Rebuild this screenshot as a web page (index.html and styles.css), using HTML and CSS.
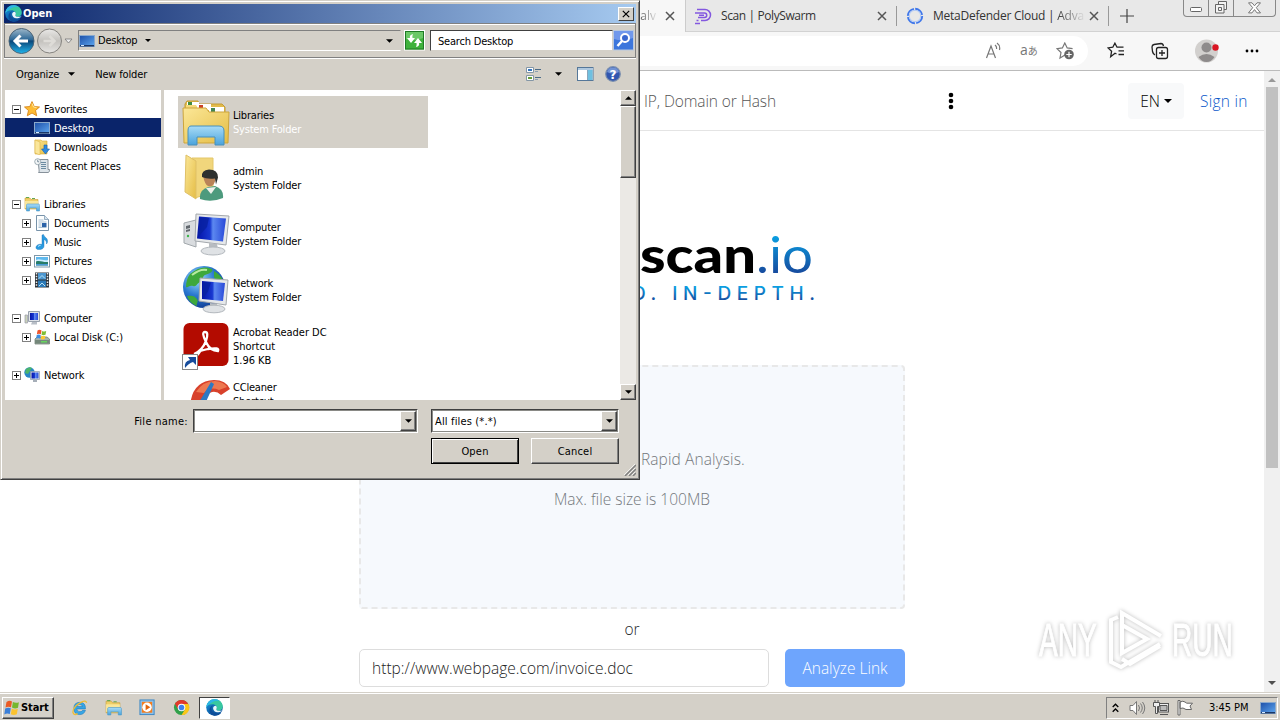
FILE: index.html
```html
<!DOCTYPE html>
<html lang="en">
<head>
<meta charset="utf-8">
<title>Open</title>
<link rel="stylesheet" href="styles.css">
</head>
<body>
<svg class="defs" width="0" height="0">
  <defs>
    <linearGradient id="gBlue" x1="0" y1="0" x2="0" y2="1"><stop offset=".2" stop-color="#0a9fe2"/><stop offset=".8" stop-color="#164da0"/></linearGradient>
    <linearGradient id="gScreen" x1="0" y1="0" x2="1" y2="0"><stop offset="0" stop-color="#0414a8"/><stop offset=".45" stop-color="#1838d0"/><stop offset=".55" stop-color="#5c88f0"/><stop offset="1" stop-color="#2848d8"/></linearGradient>
    <linearGradient id="gFolder" x1="0" y1="0" x2="1" y2="1"><stop offset="0" stop-color="#fbe798"/><stop offset="1" stop-color="#e5bd45"/></linearGradient>
    <linearGradient id="gStand" x1="0" y1="0" x2="0" y2="1"><stop offset="0" stop-color="#a9dcf7"/><stop offset="1" stop-color="#4aa3dc"/></linearGradient>
    <linearGradient id="gDesk" x1="0" y1="0" x2="1" y2="1"><stop offset="0" stop-color="#1d4fa8"/><stop offset="1" stop-color="#5fa8f0"/></linearGradient>
    <linearGradient id="gEdge" x1="0" y1="0" x2="1" y2="1"><stop offset="0" stop-color="#1b9de2"/><stop offset=".6" stop-color="#0c59a4"/></linearGradient>
    <radialGradient id="gGlobe" cx=".35" cy=".3" r=".8"><stop offset="0" stop-color="#9fe0ff"/><stop offset=".5" stop-color="#2a78d0"/><stop offset="1" stop-color="#0a2f88"/></radialGradient>
    <linearGradient id="gBack" x1="0" y1="0" x2="0" y2="1"><stop offset="0" stop-color="#9db7c9"/><stop offset=".45" stop-color="#2c6796"/><stop offset=".5" stop-color="#0a4678"/><stop offset="1" stop-color="#20b4ec"/></linearGradient>
    <linearGradient id="gFwd" x1="0" y1="0" x2="0" y2="1"><stop offset="0" stop-color="#e9e8e6"/><stop offset=".5" stop-color="#c4c2be"/><stop offset="1" stop-color="#e6e5e3"/></linearGradient>

    <symbol id="edge" viewBox="0 0 16 16">
      <circle cx="8" cy="8" r="7.800" fill="url(#gEdge)"/>
      <path d="M.3 7.500C.9 3 4.100.2 8 .2c4.400 0 7.800 3 7.800 6.800 0 2.400-1.800 4-4.100 4-1.800 0-2.500-.7-2-1.500C11 7.500 9 5 6 5 3.200 5 1 6 .3 7.500z" fill="#38c8a0"/>
      <path d="M.3 7.500C.9 3 4.100.2 8 .2c2 0 3.800.6 5.100 1.700C9 1 5 2.500.3 7.500z" fill="#2cb5e8"/>
      <path d="M6.500 6C4 8 5 12.500 9.500 13.500c1.800.4 3.600 0 4.900-.8-1.300 2-3.700 3.200-6.400 3.100C4.500 15 2 11 4 8c.7-1.100 1.500-1.700 2.500-2z" fill="#0d4d98"/>
      <path d="M9.800 9.300c.8-1.300.3-2.500-.8-3-1.300.1-2.300 1.100-2.300 2.400 0 2.300 2.500 4.200 5.200 3.800 1.600-.2 2.800-.9 3.600-1.900-1.700 1-6.700.6-5.700-1.300z" fill="#e9f7fb"/>
    </symbol>
    <symbol id="desk" viewBox="0 0 16 14"><rect x=".5" y="1.500" width="15" height="11" fill="url(#gDesk)" stroke="#8ba9cc"/><path d="M1 11h14v1.500H1z" fill="#1b3767"/><path d="M2 11h3v1H2z" fill="#d5e9ff"/></symbol>
    <symbol id="star" viewBox="0 0 16 16"><path d="M8 .6l2.200 4.900 5.300.5-4 3.500 1.200 5.300L8 12l-4.700 2.800 1.200-5.300-4-3.500 5.300-.5z" fill="#fdbb35" stroke="#d98617" stroke-width=".9"/><path d="M8 2.500L9.500 6l3 .5" fill="none" stroke="#ffe9a0"/></symbol>
    <symbol id="down" viewBox="0 0 16 16"><path d="M1 1h6l1 1h5v13H1z" fill="url(#gFolder)" stroke="#d9ac3a" stroke-width=".6"/><path d="M1 1l5 2v13l-5-2z" fill="#fae69b" stroke="#d9ac3a" stroke-width=".5"/><path d="M10 6h3v4h2.500l-4 5-4-5H10z" fill="#2f8ae0" stroke="#1660b0" stroke-width=".6"/></symbol>
    <symbol id="recent" viewBox="0 0 16 16"><path d="M4 1.500h10v10h1.500c0 2-.5 3-1.500 3H4.500c1-1 .5-2 .5-3z" fill="#dde4e9" stroke="#7a8690" stroke-width=".9"/><path d="M7 4.500h5M7 6.500h5M7 8.500h5M7 10.500h5" stroke="#5f8098" stroke-width=".9"/><circle cx="3.700" cy="3.700" r="3" fill="#f4f7f8" stroke="#8a9aa5" stroke-width=".8"/><path d="M3.700 1.800v2h1.500" fill="none" stroke="#4c6579" stroke-width=".7"/></symbol>
    <symbol id="lib" viewBox="0 0 16 16"><path d="M1 2h5l1 1.500h7V13H1z" fill="#efcf66" stroke="#c99f35" stroke-width=".6"/><path d="M2 1.500h3M8 2.500h3" stroke="#65a850"/><path d="M1 5h13v7H1z" fill="#f9e69a"/><path d="M3.500 8h11c1 0 1 1 1 1.500V15h-3v-3h-7v3h-3V9.500c0-1 .3-1.500 1-1.500z" fill="url(#gStand)" stroke="#4d9bc9" stroke-width=".6"/></symbol>
    <symbol id="doc" viewBox="0 0 16 16"><path d="M2.500.5h8l4 4v11h-12z" fill="#fdfefe" stroke="#7893aa"/><path d="M10.500.5v4h4" fill="#d6e4ef" stroke="#7893aa" stroke-width=".7"/><path d="M4.500 5h5M4.500 7h8M4.500 12.500h8" stroke="#93b1ca" stroke-width=".8"/><path d="M8 8h4.500v4H8z" fill="#2c63a8"/><path d="M4.500 9h3M4.500 11h3" stroke="#93b1ca" stroke-width=".8"/></symbol>
    <symbol id="music" viewBox="0 0 16 16"><path d="M8 1l1.500-.5c.5 3 4.500 3 4 7 0 1-.5 2-1 2.500.5-3-1.500-4-2.500-4.500v6.500c0 2-1.500 3-3.500 3.500C3.500 16 1.500 14.800 2 13c.4-2 3.500-3.500 6-2.500z" fill="#2a9be0" stroke="#1269b0" stroke-width=".4"/><path d="M4 12.500c.6-.8 1.500-1 2.500-1" stroke="#bfe8ff" fill="none"/></symbol>
    <symbol id="pic" viewBox="0 0 16 16"><rect x=".5" y="2.500" width="15" height="11.500" fill="#fff" stroke="#7e98aa"/><path d="M2 4h12v5H2z" fill="#5eb9ee"/><path d="M2 7c3-2 7 1 12 0v2H2z" fill="#cdeeff"/><path d="M2 8.500c4-1.500 7 1 12 .5v3.500H2z" fill="#287d69"/><path d="M2 11h12v1.500H2z" fill="#4a9ad8"/></symbol>
    <symbol id="vid" viewBox="0 0 16 16"><path d="M1 .5h14v15H1z" fill="#2d3339"/><path d="M4 1h8v6.500H4z" fill="#4d97d0"/><path d="M4 8.500h8V15H4z" fill="#2c7ab8"/><path d="M5 6.500l3-3 3 3M5 14l3-3 3 3" stroke="#b9e2f2" fill="none"/><path d="M2.500 1v14M13.500 1v14" stroke="#eee" stroke-width="1.500" stroke-dasharray="1.500 1.300"/></symbol>
    <symbol id="pc" viewBox="0 0 48 48"><path d="M2 13l12-3v27l-12-4z" fill="#d9dcdf" stroke="#a2a8ac"/><path d="M4 16l4-1v3l-4 1zM4 20l4-1v2l-4 1z" fill="#62686e"/><circle cx="6" cy="26" r="1.200" fill="#3db54a"/><path d="M14 4l33 2-3 29-31-4z" fill="#e6e8ea" stroke="#a3a8ad"/><path d="M17 6.500l27 2-3 23-26-3z" fill="url(#gScreen)"/><path d="M18 7.500l9 .5-2 9-9 10z" fill="#0820a0" opacity=".8"/><path d="M27 33l8 1 1 5h-9z" fill="#b8bcc1"/><ellipse cx="31" cy="41" rx="12" ry="4" fill="#dfe2e5" stroke="#b3b8bd"/></symbol>
    <symbol id="net" viewBox="0 0 48 48"><circle cx="22" cy="21" r="21" fill="url(#gGlobe)"/><path d="M8 8c8-7 16-8 22-5 2 3-4 5-7 6s-1 5-5 7-3 5-7 4-5 2-7 1c0-5 1-9 4-13zM5 30c5-1 8 0 10 3s-1 4 0 7c-5-2-8-5-10-10zM32 5c5 3 9 7 10 12-4 2-8-2-10-6z" fill="#3ea83c"/><path d="M10 9c5-4 11-6 15-5" stroke="#b7eaa0" stroke-width="2" fill="none"/><path d="M18 12l28 2-2 25-27-4z" fill="#e6e8ea" stroke="#a3a8ad"/><path d="M20 15l23 2-2 18-21-2z" fill="url(#gScreen)"/><path d="M21 16l8 .5-3 9-5 7z" fill="#0820a0" opacity=".8"/><path d="M28 37l7 1 1 5h-8z" fill="#b8bcc1"/><ellipse cx="32" cy="43" rx="11" ry="3.800" fill="#dfe2e5" stroke="#b3b8bd"/></symbol>
    <symbol id="drive" viewBox="0 0 16 16"><path d="M1 10l2-2h10l2.500 2v5H1z" fill="#a7b2ab" stroke="#68756b" stroke-width=".7"/><path d="M1 11h14.500v3.500H1z" fill="#74877a"/><path d="M7 12h6v1.500H7z" fill="#65d65d"/><path d="M3.500 1.500q2-1.500 4 0l-.6 3.800q-2-1-4 0z" fill="#f0562b"/><path d="M8.200 1.900q2 1 4 .2l-.7 3.700q-2 .8-4 0z" fill="#7fbe35"/><path d="M2.700 6q2-1.200 4 0L6.200 9.500q-2-1-4 0z" fill="#3c8de0"/><path d="M7.400 6.500q2 1 4 .2l-.6 3.300q-2 .8-4 0z" fill="#fcc935"/></symbol>
    <symbol id="flag" viewBox="0 0 18 16"><path d="M3.500 2q3-2 5.500-.5L8 7.200q-3-1.200-5.500.4z" fill="#ea5a24"/><path d="M9.900 2q3 1.500 6 .2L15 7.800q-3 1.400-6-.2z" fill="#75b72d"/><path d="M2.200 8.600q3-1.600 5.600-.3L6.800 14q-3-1.200-5.500.5z" fill="#3b7fd8"/><path d="M8.800 8.600q3 1.600 6 .2l-1 5.500q-3 1.500-6-.1z" fill="#fbc22f"/></symbol>
    <symbol id="tri" viewBox="0 0 8 4"><path d="M0 0h8L4 4z" fill="currentColor"/></symbol>
    <symbol id="x" viewBox="0 0 10 10"><path d="M1 1l8 8M9 1l-8 8" stroke="currentColor" stroke-width="1.500"/></symbol>
  </defs>
</svg>

<div class="screen">
  <main class="browser">
    <div class="tabs">
      <div class="tab active"><span class="fade">alv</span><svg class="tx"><use href="#x"/></svg></div>
      <div class="tab poly">
        <svg class="fav" viewBox="0 0 18 18" fill="none" stroke="#8358df" stroke-width="1.500"><path d="M3 2.500h8a5.500 5.500 0 0 1 0 11H7M1 6h9.500a2.200 2.200 0 0 1 0 4.500H4M5 8.300h5M1 16.500h5M2.500 13.500h2"/></svg>
        <span>Scan | PolySwarm</span><svg class="tx"><use href="#x"/></svg>
      </div>
      <div class="tab meta">
        <svg class="fav" viewBox="0 0 18 18" fill="none"><circle cx="9" cy="9" r="7.200" stroke="#3f77ea" stroke-width="1.900" stroke-dasharray="10 1.300"/><circle cx="9" cy="9" r="5.700" stroke="#9fc0fb" stroke-width=".8"/></svg>
        <span>MetaDefender Cloud | <b>Adva</b></span><svg class="tx"><use href="#x"/></svg>
      </div>
      <svg class="plus" viewBox="0 0 14 14"><path d="M7 0v14M0 7h14" stroke="#444" stroke-width="1.200"/></svg>
      <div class="winbtns">
        <i class="w1"><svg width="13" height="6"><rect x=".5" y=".5" width="11" height="4" rx="1" fill="#fff" stroke="#666"/></svg></i>
        <i class="w2"><svg width="14" height="14" fill="#f3f3f3" stroke="#666"><path d="M4.500.5h8v8h-8z"/><path d="M1.500 3.500h8.500v8.500H1.500z"/><path d="M4.500 6.500h3v3h-3z"/></svg></i>
        <i class="w3"><svg width="13" height="12"><path d="M.5.800h3.500l2.500 3 2.500-3h3.500L8.300 5.700l4.200 5.200H9L6.500 7.600 4 10.900H.5l4.200-5.200z" fill="#fff" stroke="#777"/></svg></i>
      </div>
    </div>
    <div class="toolbar">
      <div class="address">
        <svg width="18" height="18" viewBox="0 0 18 18" fill="none" stroke="#777" stroke-width="1.200"><path d="M3.500 16L8 4 12.500 16M5.100 12h5.800M12 3q2 1.500 1.500 4M14 1q3.500 2.500 2.500 7"/></svg>
        <span class="aa">a<small>あ</small></span>
        <svg width="19" height="18" viewBox="0 0 19 18"><path d="M9 13l-5 3 1-5.500L1 6.700l5.400-.8L8.800 1l2.400 4.900 5.400.8" fill="none" stroke="#777" stroke-width="1.200"/><circle cx="13" cy="12.500" r="4.800" fill="#666"/><path d="M13 9.800v5.400M10.300 12.500h5.400" stroke="#fff" stroke-width="1.200"/></svg>
      </div>
      <svg class="b1" viewBox="0 0 18 18"><path d="M9.500 12L8 11.200l-4.300 3.500.9-5.500L1 5.900l4.800-.7L7.900 1.200l2.100 4h6.500M11.500 8.800H17M11.500 12.500H17" fill="none" stroke="#222" stroke-width="1.300"/></svg>
      <svg class="b2" viewBox="0 0 18 18" fill="none" stroke="#222" stroke-width="1.300"><path d="M4 13Q2 12 1.500 9.500L1 5q0-2 2-2.500l7-1q2 0 2.500 2.500"/><rect x="5.500" y="5.500" width="11" height="11" rx="2"/><path d="M11 8v6M8 11h6"/></svg>
      <svg class="b3" viewBox="0 0 24 24"><circle cx="11.500" cy="12" r="11.500" fill="#d2d0ce"/><circle cx="11.500" cy="8.500" r="5" fill="#8e8b8b"/><path d="M3.500 18q8-6 16 0-3 5-8 5t-8-5z" fill="#8e8b8b"/><circle cx="20.500" cy="8.500" r="3.200" fill="#d91522"/></svg>
      <svg class="b4" viewBox="0 0 14 4"><circle cx="2" cy="2" r="1.400"/><circle cx="7" cy="2" r="1.400"/><circle cx="12" cy="2" r="1.400"/></svg>
    </div>
    <div class="view">
      <div class="site">
        <header class="sitehead">
          <span class="ph">IP, Domain or Hash</span>
          <svg class="dots" viewBox="0 0 6 18"><circle cx="3" cy="3" r="2.300"/><circle cx="3" cy="9" r="2.300"/><circle cx="3" cy="15" r="2.300"/></svg>
          <span class="lang">EN<svg><use href="#tri"/></svg></span>
          <a class="signin">Sign in</a>
        </header>
        <section class="hero">
          <svg class="logo" width="200" height="76" viewBox="0 0 200 76">
            <text x="0" y="43" class="lg1" textLength="116" lengthAdjust="spacingAndGlyphs">scan</text>
            <text x="116" y="43" class="lg2" textLength="57" lengthAdjust="spacingAndGlyphs">.io</text>
            <text x="-8" y="70" class="lg3" textLength="183" lengthAdjust="spacing">D. IN-DEPTH.</text>
          </svg>
          <div class="drop"><p class="rapid">Rapid Analysis.</p><p class="max">Max. file size is 100MB</p></div>
          <div class="or">or</div>
          <div class="linkrow"><div class="url">http://www.webpage.com/invoice.doc</div><div class="analyze">Analyze Link</div></div>
        </section>
        <div class="mark">
          <span>ANY</span>
          <svg width="62" height="64" viewBox="0 0 62 64" fill="none" stroke="#fff" stroke-width="4"><path d="M16 46V5l39 23M12 9L5 12v42l10 5 39-23M16 17v28l25-14zM16 51l8 5 30-18"/></svg>
          <span>RUN</span>
        </div>
      </div>
      <div class="sbar"><svg class="up"><use href="#tri"/></svg><div class="thumb"></div><svg class="dn"><use href="#tri"/></svg></div>
    </div>
  </main>

  <footer class="taskbar">
    <div class="start"><svg width="18" height="16"><use href="#flag"/></svg><b>Start</b></div>
    <svg class="q" viewBox="0 0 18 18"><path d="M15.300 10.500H6q.3 3 3.500 3 2 0 2.800-1.500h3q-1.500 4.500-6 4.500-6.300 0-6.300-6.500T9.500 3.500q6 0 5.800 7zM6 8h6.200Q11.800 5.800 9.200 5.800T6 8z" fill="#36a6e6" stroke="#1878bd" stroke-width=".6"/><path d="M16.500 4Q16 1 11 3.300 2 8 2 14q1 4 5 1.500" fill="none" stroke="#eebd34" stroke-width="1.400"/></svg>
    <svg class="q"><use href="#lib"/></svg>
    <svg class="q" viewBox="0 0 18 18"><rect x="1" y="1" width="15" height="15.500" fill="#8dc2ec" stroke="#3b86c3"/><rect x="3" y="3" width="11" height="11.500" fill="#f47d1f"/><circle cx="8.500" cy="8.700" r="5" fill="#fff"/><path d="M7 5.500l5 3.200-5 3.200z" fill="#e3650c"/></svg>
    <svg class="q" viewBox="0 0 18 18"><circle cx="9" cy="9" r="8" fill="#30a04a"/><path d="M9 17l4-6.500L9 5h7.200A8 8 0 0 1 9 17z" fill="#fbc618"/><path d="M2 5A8 8 0 0 1 16 5.200H9L5.500 11z" fill="#e2392c"/><circle cx="9" cy="9" r="4" fill="#fff"/><circle cx="9" cy="9" r="3" fill="#4082ec"/></svg>
    <div class="task"><svg width="17" height="17"><use href="#edge"/></svg></div>
    <div class="tray">
      <svg width="7" height="10" viewBox="0 0 7 10" fill="none" stroke="#000" stroke-width="1.300"><path d="M.7 4l2.800-2.800L6.300 4M.7 8.800L3.500 6l2.800 2.800"/></svg>
      <svg class="t2" width="17" height="16" viewBox="0 0 17 16" fill="none" stroke="#777"><path d="M1 5.500h3l3.500-4v13l-3.500-4H1z" fill="#fff"/><path d="M9.500 5q2 3 0 6M11.500 3.500q3.500 4.500 0 9M13.500 2q4.500 6 0 12"/></svg>
      <svg class="t3" width="16" height="16" viewBox="0 0 16 16" fill="#eee" stroke="#555"><rect x="5.500" y="3.500" width="10" height="8.500"/><path d="M7 5.500h7v5H7z" fill="#bbb"/><path d="M.5 2.500h6v4h-2v7h-2v-7h-2zM2 0v2.500M5 0v2.500M7 14.500h8"/></svg>
      <svg class="t4" width="17" height="16" viewBox="0 0 17 16" fill="#fff" stroke="#666"><path d="M1 .5h2V15H1zM3 2q3-1.500 5 0t2 1.200h5.500L13 6l1.500 3.500H9Q6 7 3 8.500z"/></svg>
      <span>3:45 PM</span>
      <svg class="t5" width="16" height="14"><use href="#desk"/></svg>
    </div>
  </footer>

  <div class="dialog">
    <div class="title"><svg width="17" height="17"><use href="#edge"/></svg><b>Open</b><i class="close"><svg><use href="#x"/></svg></i></div>
    <div class="nav">
      <svg class="arrows" width="68" height="28" viewBox="0 0 68 28">
        <circle cx="14.500" cy="14" r="12.500" fill="url(#gBack)" stroke="#4b6376"/><path d="M8 14h13M13.500 8.500L8 14l5.500 5.500" stroke="#fff" stroke-width="3" fill="none"/>
        <circle cx="42.500" cy="14" r="12" fill="url(#gFwd)" stroke="#85837f"/><path d="M36.500 14h11M42.500 9l5 5-5 5" stroke="#dedcd8" stroke-width="2.500" fill="none"/>
        <path d="M58 12h7l-3.500 4z" fill="#eee" stroke="#777" stroke-width=".8"/>
      </svg>
      <div class="crumb"><svg width="16" height="14"><use href="#desk"/></svg><span>Desktop</span><svg class="dd s"><use href="#tri"/></svg><svg class="dd e"><use href="#tri"/></svg></div>
      <svg class="refresh" width="21" height="21" viewBox="0 0 21 21"><rect x=".5" y=".5" width="20" height="19.500" fill="#3fb23c" stroke="#fff"/><rect x="1.500" y="1.500" width="18" height="17.500" fill="none" stroke="#207a25"/><path d="M2 2h17v6Q10 12 2 9z" fill="#6ac866"/><path d="M9 4Q5 5 6 8H3l4 5 4-5H8.500Q8 6 9 4zM12 17q4-1 3-4h3l-4-5-4 5h2.500q.5 2-.5 4z" fill="#fff"/></svg>
      <div class="search">Search Desktop</div>
      <svg class="mag" width="21" height="21" viewBox="0 0 21 21"><rect x=".5" y=".5" width="20" height="19.500" fill="#3c76dc" stroke="#b8c8df"/><path d="M1 1h19v7Q10 12 1 9z" fill="#7098ec"/><circle cx="12" cy="8" r="4" fill="#3a68d0" stroke="#fff" stroke-width="2"/><path d="M9 11l-4.500 5" stroke="#fff" stroke-width="2.500"/></svg>
    </div>
    <div class="cmd">
      <span>Organize</span><svg class="dd"><use href="#tri"/></svg><span class="nf">New folder</span>
      <svg class="c1" width="16" height="16" viewBox="0 0 16 16"><path d="M.5 1.500h7v5h-7zM.5 9.500h7v5h-7z" fill="#fff" stroke="#8496a6"/><path d="M2 3h4v2H2z" fill="#3374bd"/><path d="M2 11h4v2H2z" fill="#669e38"/><path d="M9 3.500h6M9 11.500h6" stroke="#4b6b88"/><path d="M9 5.500h3M9 13.500h3" stroke="#8ba0b3"/></svg>
      <svg class="dd c2"><use href="#tri"/></svg>
      <svg class="c3" width="17" height="14" viewBox="0 0 17 14"><rect x=".5" y=".5" width="15.500" height="13" fill="#fff" stroke="#557799"/><path d="M1 1h15v2H1z" fill="#afc8df"/><path d="M11 3h4.500v10H11z" fill="#6fc0e0"/><path d="M10.500 3v10" stroke="#8aa5bb"/></svg>
      <svg class="c4" width="16" height="16" viewBox="0 0 16 16"><circle cx="8" cy="8" r="7.300" fill="#3156af" stroke="#7b8fae" stroke-width="1.200"/><path d="M2 6a6.300 6.300 0 0 1 12 0Q8 9 2 6z" fill="#7192d3"/><text x="8" y="12.500" text-anchor="middle" class="qm">?</text></svg>
    </div>
    <div class="body">
      <nav class="tree">
        <div class="row"><i class="pm"></i><svg><use href="#star"/></svg><span>Favorites</span></div>
        <div class="row sub sel"><i></i><svg><use href="#desk"/></svg><span>Desktop</span></div>
        <div class="row sub"><i></i><svg><use href="#down"/></svg><span>Downloads</span></div>
        <div class="row sub"><i></i><svg><use href="#recent"/></svg><span>Recent Places</span></div>
        <div class="row"></div>
        <div class="row"><i class="pm"></i><svg><use href="#lib"/></svg><span>Libraries</span></div>
        <div class="row sub"><i class="pm plusb"></i><svg><use href="#doc"/></svg><span>Documents</span></div>
        <div class="row sub"><i class="pm plusb"></i><svg><use href="#music"/></svg><span>Music</span></div>
        <div class="row sub"><i class="pm plusb"></i><svg><use href="#pic"/></svg><span>Pictures</span></div>
        <div class="row sub"><i class="pm plusb"></i><svg><use href="#vid"/></svg><span>Videos</span></div>
        <div class="row"></div>
        <div class="row"><i class="pm"></i><svg viewBox="0 0 16 16"><path d="M1 5h2.500v8H1z" fill="#c9d3b8" stroke="#99a" stroke-width=".7"/><path d="M4.500 1.500h11v10h-11z" fill="#dfe3e8" stroke="#99a2ad"/><path d="M6 3h8v7H6z" fill="url(#gScreen)"/><path d="M8 12h5v2.500H7z" fill="#b8bec6"/></svg><span>Computer</span></div>
        <div class="row sub"><i class="pm plusb"></i><svg><use href="#drive"/></svg><span>Local Disk (C:)</span></div>
        <div class="row"></div>
        <div class="row"><i class="pm plusb"></i><svg viewBox="0 0 16 16"><circle cx="5.500" cy="5.500" r="5.200" fill="#2786c8"/><path d="M2 2q4-3 6-1L6 4 4 7 1 6zM6 8l3-2 1 2-2 2z" fill="#4cb56b"/><path d="M6.500 4.500h9v8h-9z" fill="#dfe3e8" stroke="#8b96a5" stroke-width=".7"/><path d="M7.500 5.500h7v6h-7z" fill="url(#gScreen)"/><path d="M9 13h4v2H9z" fill="#a6aeb8"/></svg><span>Network</span></div>
      </nav>
      <div class="files">
        <div class="file hl"><svg viewBox="0 0 48 48"><path d="M3 6l2-3h11l1 3h23l3 3v34H3z" fill="#e3bb4b" stroke="#c29b35"/><path d="M5 4h12v5H5z" fill="#fff"/><path d="M6 4h4v4H6z" fill="#3f8b41"/><path d="M4 7h10l2 3h10v4H4z" fill="#f4d97a"/><path d="M15 6h14v6H15z" fill="#fff"/><path d="M17 7h4v4h-4z" fill="#cb4128"/><path d="M27 9h15v6H27z" fill="#fff"/><path d="M29 10h4v4h-4z" fill="#418653"/><path d="M1 10h23l3 4h20l-1 31H2z" fill="url(#gFolder)" stroke="#cda53c"/><path d="M9 28h28q5 0 5 5v14h-9v-8H15v8H6V33q0-5 3-5z" fill="url(#gStand)" stroke="#4990bc"/></svg><p>Libraries<br><em>System Folder</em></p></div>
        <div class="file"><svg viewBox="0 0 48 48"><path d="M10 4l21 0v34l-18 6z" fill="#f1d67c" stroke="#e4c768"/><path d="M4 1l10 6v38L3 38z" fill="url(#gFolder)" stroke="#dfc067"/><path d="M18 45q-1-9 8-12l7-1q9 3 8 12-12 5-23 1z" fill="#4d9a7d"/><path d="M24 34l5 6 5-7z" fill="#eef0ea"/><path d="M21 22q0-5 7-5t6 6-3 8-5 1-5-10z" fill="#b98358"/><path d="M20 23q-1-7 7-7.500 9 0 9 8l-2 7-1-6q-8 1-13-1.500z" fill="#2d3030"/></svg><p>admin<br><em>System Folder</em></p></div>
        <div class="file"><svg><use href="#pc"/></svg><p>Computer<br><em>System Folder</em></p></div>
        <div class="file"><svg><use href="#net"/></svg><p>Network<br><em>System Folder</em></p></div>
        <div class="file wide"><svg viewBox="0 0 48 48"><rect x="1.500" y="1" width="45" height="43" rx="6" fill="#b30b00"/><path d="M12 32Q20 29 24 19q3-9-1-9t1 10q4 9 12 9 2-4-10-2-14 3-13 6 2 2 6-5" fill="none" stroke="#fff" stroke-width="2.300"/><rect x=".5" y="32.500" width="15" height="15" fill="#fff" stroke="#888"/><path d="M3 46q-1-7 5-8l-2-3h8v8l-3-3q-4 1-8 6z" fill="#174c9c"/></svg><p>Acrobat Reader DC<br>Shortcut<br>1.96 KB</p></div>
        <div class="file last"><svg viewBox="0 0 48 48"><path d="M8 30Q9 3 32 2q12 0 16 9l-9 6q-4-4-9-3-9 3-8 14z" fill="#d8412b"/><path d="M14 14q7-11 19-11 9 1 12 6l-8 3q-9-4-15 3z" fill="#ed7850"/><path d="M29 4l3 2-9 20h-7z" fill="#2d78c3"/><path d="M18 24l7 2-6 12h-9z" fill="#82bbe8"/></svg><p>CCleaner<br>Shortcut</p></div>
      </div>
      <div class="dsb"><i class="btn up3"><svg><use href="#tri"/></svg></i><i class="btn th"></i><i class="btn dn3"><svg><use href="#tri"/></svg></i></div>
    </div>
    <div class="foot">
      <div class="frow"><label>File name:</label><div class="combo cf"><span></span><i class="btn"><svg><use href="#tri"/></svg></i></div><div class="combo ct"><span>All files (*.*)</span><i class="btn"><svg><use href="#tri"/></svg></i></div></div>
      <div class="brow"><div class="pb def">Open</div><div class="pb">Cancel</div></div>
      <svg class="grip" width="12" height="12"><path d="M1 12L12 1M5 12l7-7M9 12l3-3" stroke="#808080" stroke-width="1.500"/><path d="M0 11L11 0M4 11l7-7M8 11l3-3" stroke="#fff" stroke-width=".7"/></svg>
    </div>
  </div>
</div>
</body>
</html>
```
FILE: styles.css
```css
* { box-sizing: border-box; }
body { margin: 0; background: #fff; }
p { margin: 0; }
i, em { font-style: normal; }
svg { flex: none; display: block; }
.defs { position: absolute; }
.screen { position: relative; width: 1280px; height: 720px; overflow: hidden; display: flex; flex-direction: column; font: 11px/14px "DejaVu Sans Condensed", "DejaVu Sans", sans-serif; font-stretch: condensed; color: #000; }

/* browser */
.browser { height: 692px; display: flex; flex-direction: column; font-family: "Open Sans", "Noto Sans", sans-serif; font-stretch: normal; }
.tabs { height: 32px; padding-left: 640px; display: flex; background: #e8e8e8; border-bottom: 1px solid #d2d2d2; font-size: 12px; color: #333; }
.tab { display: flex; align-items: center; height: 31px; }
.tab.active { width: 46px; height: 32px; background: #f7f7f7; border-right: 1px solid #ccc; justify-content: flex-end; padding-right: 10px; gap: 9px; }
.fade { background: linear-gradient(90deg, #555, #ddd); -webkit-background-clip: text; background-clip: text; color: transparent; }
.tx { width: 10px; height: 10px; color: #555; }
.fav { width: 18px; height: 18px; }
.poly { width: 211px; padding: 0 9px 0 8px; gap: 9px; border-right: 1px solid #999; height: 20px; margin-top: 6px; }
.poly .tx { margin-left: auto; }
.poly span { letter-spacing: -.4px; }
.meta { width: 212px; padding: 0 14px 0 9px; gap: 9px; border-right: 1px solid #999; height: 20px; margin-top: 6px; }
.meta span { white-space: nowrap; letter-spacing: -.25px; width: 151px; }
.meta b { font-weight: 400; background: linear-gradient(90deg, #333, #ddd); -webkit-background-clip: text; background-clip: text; color: transparent; }
.meta .tx { margin-left: -4px; }
.plus { width: 14px; height: 14px; margin: 9px 0 0 11px; }
.winbtns { margin-left: auto; margin-right: 4px; width: 93px; height: 17px; display: flex; border: 1px solid #888; border-top: 0; border-radius: 0 0 4px 4px; }
.winbtns i { display: flex; align-items: center; justify-content: center; border-right: 1px solid #888; }
.w1 { width: 25px; padding-top: 4px; }
.w2 { width: 25px; }
.winbtns .w3 { flex: 1; border: 0; }
.toolbar { height: 39px; background: #f7f7f7; border-bottom: 1px solid #bbb; padding-left: 640px; display: flex; align-items: center; }
.address { width: 448px; height: 30px; background: #fff; border-radius: 0 15px 15px 0; display: flex; align-items: center; justify-content: flex-end; padding-right: 13px; }
.aa { font-size: 14px; color: #777; margin: 0 17px 2px 19px; width: 19px; white-space: nowrap; }
.aa small { font: 10px "Noto Sans CJK JP", sans-serif; }
.b1 { width: 18px; height: 18px; margin-left: 19px; }
.b2 { width: 18px; height: 18px; margin-left: 26px; }
.b3 { width: 24px; height: 24px; margin-left: 26px; }
.b4 { width: 14px; height: 4px; margin-left: 26px; }
.view { flex: 1; display: flex; min-height: 0; }
.site { width: 1264px; position: relative; overflow: hidden; font-weight: 300; font-size: 15.5px; line-height: 24px; }
.sitehead { height: 60px; border-bottom: 1px solid #e4e4e4; padding-left: 644px; display: flex; align-items: center; }
.ph { width: 303px; color: #555; letter-spacing: -.1px; }
.dots { width: 6px; height: 18px; margin-left: 1px; }
.lang { margin-left: 174px; width: 56px; height: 36px; background: #f8f9fa; border-radius: 4px; display: flex; align-items: center; justify-content: center; gap: 4px; color: #000; }
.lang svg { width: 8px; height: 4px; }
.signin { margin-left: 16px; color: #0a58ca; letter-spacing: .25px; }
.hero { width: 546px; margin-left: 359px; padding-top: 99px; }
.logo { display: block; margin-left: 281px; margin-bottom: 59px; overflow: visible; }
.lg1 { font: 900 50px Lato, sans-serif; }
.lg2 { font: 400 50px Lato, sans-serif; fill: url(#gBlue); }
.lg3 { font: 500 19px Inter, sans-serif; fill: url(#gBlue); }
.drop { height: 244px; background: #f6f9fd; border: 2px dashed #e8e8e8; border-radius: 4px; color: #74787c; text-align: center; padding-top: 80px; display: flex; flex-direction: column; gap: 16px; }
.rapid { padding-left: 280px; text-align: left; letter-spacing: .1px; }
.or { text-align: center; color: #212529; padding: 8px 0 8px; }
.linkrow { display: flex; gap: 16px; }
.url { width: 410px; height: 38px; border: 1px solid #ddd; border-radius: 5px; line-height: 37px; padding-left: 12px; color: #222; letter-spacing: .03px; }
.analyze { width: 120px; height: 38px; border-radius: 5px; background: #6ea5fd; color: #fff; text-align: center; line-height: 38px; }
.mark { position: absolute; left: 1039px; top: 537px; display: flex; align-items: center; gap: 4px; filter: drop-shadow(0 0 2px #bbb); color: #fff; }
.mark span { font: 400 46px/64px "Liberation Sans", sans-serif; -webkit-text-stroke: 1px #fff; width: 63px; transform: scaleX(.61); transform-origin: 0 50%; }
.sbar { width: 16px; background: #f0f0f0; display: flex; flex-direction: column; align-items: center; color: #505050; padding: 7px 0; }
.sbar svg { width: 8px; height: 4px; }
.sbar .up { transform: rotate(180deg); color: #999; }
.thumb { width: 12px; height: 381px; background: #c1c1c1; margin-top: 5px; }
.dn { margin-top: auto; }

/* taskbar */
.taskbar { height: 28px; background: #d4d0c8; border-top: 1px solid #d4d0c8; box-shadow: inset 0 1px #fff; display: flex; align-items: center; padding: 2px 2px 0; }
.start { width: 52px; height: 22px; display: flex; align-items: center; background: #d4d0c8; border: 1px solid; border-color: #fff #404040 #404040 #fff; box-shadow: inset -1px -1px #808080; font: 700 11px "DejaVu Sans Condensed", sans-serif; margin-right: 17px; }
.start b { letter-spacing: -.1px; }
.q { width: 17px; height: 17px; margin-right: 17px; }
.q:nth-of-type(4) { margin-right: 16px; }
.task { width: 31px; height: 22px; margin-left: -7px; padding-left: 6px; background: #fff; border: 1px solid; border-color: #404040 #fff #fff #404040; display: flex; align-items: center; }
.tray { margin-left: auto; width: 172px; height: 22px; border: 1px solid; border-color: #808080 #fff #fff #808080; display: flex; align-items: center; padding-left: 5px; }
.t2 { margin-left: 10px; }
.t3 { margin-left: 7px; }
.t4 { margin-left: 8px; }
.tray span { margin-left: 15px; width: 42px; white-space: nowrap; letter-spacing: -.05px; }
.t5 { margin-left: 9px; }

/* file dialog */
.dialog { position: absolute; left: 0; top: 0; width: 640px; height: 480px; background: #d4d0c8; border: 1px solid; border-color: #d4d0c8 #404040 #404040 #d4d0c8; box-shadow: inset 1px 1px #fff, inset -1px -1px #808080; padding: 3px; display: flex; flex-direction: column; }
.title { height: 19px; background: linear-gradient(90deg, #0a246a, #a6caf0); display: flex; align-items: center; color: #fff; font-size: 11px; padding: 0 2px 0 1px; }
.title b { margin-left: 1px; }
.close { margin-left: auto; width: 16px; height: 14px; background: #d4d0c8; color: #000; border: 1px solid; border-color: #fff #404040 #404040 #fff; display: flex; align-items: center; justify-content: center; }
.close svg { width: 8px; height: 8px; }
.nav { height: 35px; border: 1px solid #808080; box-shadow: 0 1px #fff, inset 0 1px #fff; display: flex; align-items: center; }
.arrows { margin-left: 2px; }
.crumb { margin-left: 3px; width: 323px; height: 21px; border: 1px solid; border-color: #808080 #d4d0c8 #fff #808080; display: flex; align-items: center; }
.crumb span { margin-left: 3px; width: 41px; white-space: nowrap; letter-spacing: -.2px; }
.dd { width: 7px; height: 4px; }
.dd.s { margin-left: 6px; width: 6px; height: 3px; }
.dd.e { margin-left: auto; margin-right: 7px; }
.refresh { margin-left: 3px; }
.search { margin-left: 5px; width: 183px; height: 21px; background: #fff; border: 1px solid; border-color: #404040 #d4d0c8 #d4d0c8 #404040; padding: 4px 7px; line-height: 13px; letter-spacing: -.2px; }
.cmd { height: 32px; display: flex; align-items: center; padding-left: 12px; }
.cmd span { letter-spacing: -.15px; padding-top: 2px; }
.cmd .dd { margin-left: 9px; }
.nf { margin-left: 20px; }
.cmd .c1 { margin-left: auto; }
.cmd .c2 { margin-left: 13px; }
.c3 { margin-left: 15px; }
.c4 { margin-left: 11px; margin-right: 15px; }
.qm { font: 700 12px "DejaVu Sans", sans-serif; fill: #fff; }
.body { height: 310px; display: flex; background: #fff; overflow: hidden; }
.tree { width: 160px; padding-top: 9px; border: 0 solid #d4d0c8; border-left-width: 1px; border-right-width: 3px; }
.row { height: 19px; display: flex; align-items: center; padding-left: 7px; white-space: nowrap; }
.row svg { width: 16px; height: 16px; margin-left: 3px; }
.row span { margin-left: 4px; padding-top: 2px; letter-spacing: -.15px; }
.row i { width: 9px; height: 9px; }
.row .pm { margin-top: 1px; }
.sub { padding-left: 17px; }
.sel { background: #0a246a; color: #fff; }
.pm { border: 1px solid #808080; background: linear-gradient(#000, #000) 50% 50% / 5px 1px no-repeat; }
.plusb { background: linear-gradient(#000, #000) 50% 50% / 5px 1px no-repeat, linear-gradient(#000, #000) 50% 50% / 1px 5px no-repeat; }
.files { flex: 1; padding: 6px 0 0 14px; display: flex; flex-direction: column; gap: 4px; }
.file { width: 250px; height: 52px; flex: none; display: flex; align-items: center; padding-left: 4px; }
.file svg { width: 48px; height: 48px; }
.file p { margin-left: 3px; padding-top: 2px; letter-spacing: -.2px; }
.wide p { letter-spacing: -.02px; }
.last p { align-self: flex-start; padding-top: 5px; }
.hl { background: #d4d0c8; }
.hl em { color: #fff; }
.dsb { width: 16px; background: #ebe9e5; display: flex; flex-direction: column; }
.btn { background: #d4d0c8; border: 1px solid; border-color: #fff #404040 #404040 #fff; box-shadow: inset -1px -1px #808080; display: flex; align-items: center; justify-content: center; width: 16px; height: 16px; flex: none; }
.btn svg { width: 7px; height: 4px; }
.up3 svg { transform: rotate(180deg); }
.btn.th { height: 72px; }
.dn3 { margin-top: auto; }
.foot { flex: 1; position: relative; padding: 9px 17px 0 0; display: flex; flex-direction: column; align-items: flex-end; gap: 5px; }
.frow { display: flex; align-items: center; }
.frow label { margin-right: 5px; letter-spacing: .28px; padding-top: 2px; }
.combo { height: 24px; background: #fff; border: 1px solid; border-color: #404040 #fff #fff #404040; box-shadow: inset 0 0 0 1px #8a8a86; display: flex; align-items: center; justify-content: space-between; padding: 1px; }
.combo span { padding-top: 2px; letter-spacing: .15px; }
.combo .btn { height: 20px; }
.cf { width: 225px; margin-right: 13px; }
.ct { width: 188px; padding-left: 3px; }
.brow { display: flex; gap: 12px; }
.pb { width: 88px; height: 26px; border: 1px solid; border-color: #fff #404040 #404040 #fff; box-shadow: inset -1px -1px #808080; text-align: center; line-height: 25px; letter-spacing: .2px; }
.def { border-color: #000; box-shadow: inset 1px 1px #fff, inset -1px -1px #404040; }
.grip { position: absolute; right: 0; bottom: 0; }
```
